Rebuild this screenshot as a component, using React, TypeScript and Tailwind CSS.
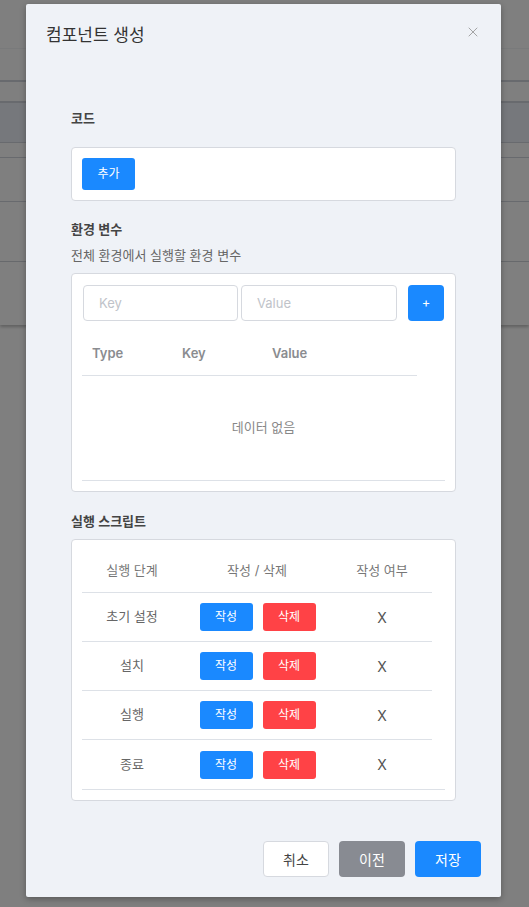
import { X } from 'lucide-react';

const steps = ['초기 설정', '설치', '실행', '종료'];

const font = { fontFamily: 'Inter, "Noto Sans CJK KR", sans-serif' };

function Backdrop() {
  // the page behind the dialog
  return (
    <div className="absolute inset-0 bg-white">
      <div className="h-[49px] border-b border-gray-100" />
      <div className="h-[33px] border-b-2 border-gray-300" />
      <div className="h-[21px] border-b-2 border-gray-300" />
      <div className="h-[40px] bg-[#ecf0f8] border-b border-gray-300" />
      <div className="h-[15px] border-b border-gray-300" />
      <div className="h-[44px] border-b border-gray-300" />
      <div className="h-[60px] border-b border-gray-300" />
      <div className="h-[63px] shadow-[0_2px_3px_rgba(0,0,0,0.25)]" />
    </div>
  );
}

function Card({ children, className = '' }: { children: React.ReactNode; className?: string }) {
  return (
    <div className={`bg-white border border-[#d6d9df] rounded-[4px] ${className}`}>{children}</div>
  );
}

export default function App() {
  return (
    <div className="relative w-[529px] h-[907px] overflow-hidden" style={font}>
      <Backdrop />
      <div className="absolute inset-0 bg-black/50" />

      <div className="absolute left-[26px] top-[4px] w-[475px] h-[893px] bg-[#eff2f7] rounded-[2px] shadow-[0_2px_6px_rgba(0,0,0,0.3)] flex flex-col">
        {/* header */}
        <div className="relative px-5 pt-[19px]">
          <h2 className="text-[17px] leading-6 text-[#333]">컴포넌트 생성</h2>
          <button className="absolute right-[20px] top-[20px] text-[#8f8f8f]">
            <X className="w-[16px] h-[16px]" strokeWidth={1.2} />
          </button>
        </div>

        {/* body */}
        <div className="flex-1 px-[45px] pt-[61px]">
          <div className="text-[13px] leading-5 font-semibold text-[#444]">코드</div>
          <Card className="mt-[19px] p-[10px]">
            <button className="w-[53px] h-[32px] rounded-[3px] bg-[#1a89ff] text-white text-[12px]">추가</button>
          </Card>

          <div className="mt-[18px] text-[13px] leading-5 font-semibold text-[#444]">환경 변수</div>
          <div className="mt-[6px] text-[13px] leading-5 text-[#666]">전체 환경에서 실행할 환경 변수</div>

          <Card className="mt-[8px] px-[10px] pt-[11px] pb-[10px]">
            <div className="flex items-center mx-px">
              <input
                placeholder="Key"
                className="w-[155px] h-[36px] border border-[#d6d9df] rounded-[4px] px-[15px] text-[13px] placeholder:text-[#c0c3c9] outline-none"
              />
              <input
                placeholder="Value"
                className="ml-[3px] w-[156px] h-[36px] border border-[#d6d9df] rounded-[4px] px-[15px] text-[13px] placeholder:text-[#c0c3c9] outline-none"
              />
              <button className="ml-auto w-[36px] h-[36px] rounded-[4px] bg-[#1a89ff] text-white text-[13px]">+</button>
            </div>
            <div className="mt-[12px] border-b border-[#dde1e7]">
              <div className="flex h-[43px] items-center w-[335px] border-b border-[#dde1e7] text-[13px] font-semibold text-[#8a8c90]">
                <div className="w-[90px] pl-[10px]">Type</div>
                <div className="w-[90px] pl-[10px]">Key</div>
                <div className="pl-[10px]">Value</div>
              </div>
              <div className="h-[104px] flex items-center justify-center text-[13px] text-[#888]">데이터 없음</div>
            </div>
          </Card>

          <div className="mt-[19px] text-[13px] leading-5 font-semibold text-[#444]">실행 스크립트</div>

          <Card className="mt-[8px] p-[10px]">
            <div className="border-b border-[#dde1e7]">
              <div className="flex h-[43px] items-center w-[350px] border-b border-[#dde1e7] text-[13px] text-[#777]">
                <div className="w-[100px] text-center">실행 단계</div>
                <div className="w-[150px] text-center">작성 / 삭제</div>
                <div className="w-[100px] text-center">작성 여부</div>
              </div>
              {steps.map((step, i) => (
                <div
                  key={step}
                  className={`flex h-[49px] items-center w-[350px] text-[13px] text-[#666] ${
                    i < steps.length - 1 ? 'border-b border-[#dde1e7]' : 'h-[48px]'
                  }`}
                >
                  <div className="w-[100px] text-center">{step}</div>
                  <div className="w-[150px] flex justify-center gap-[10px] pl-px">
                    <button className="w-[53px] h-[28px] rounded-[3px] bg-[#1a89ff] text-white text-[12px]">작성</button>
                    <button className="w-[53px] h-[28px] rounded-[3px] bg-[#ff4246] text-white text-[12px]">삭제</button>
                  </div>
                  <div className="w-[100px] text-center text-[#555] text-[14px]">X</div>
                </div>
              ))}
            </div>
          </Card>
        </div>

        {/* footer */}
        <div className="flex justify-end gap-[10px] px-5 pb-5">
          <button className="w-[66px] h-[36px] rounded-[4px] bg-white border border-[#d6d9df] text-[14px] text-[#444]">취소</button>
          <button className="w-[66px] h-[36px] rounded-[4px] bg-[#888b92] text-white text-[14px]">이전</button>
          <button className="w-[66px] h-[36px] rounded-[4px] bg-[#1a89ff] text-white text-[14px]">저장</button>
        </div>
      </div>
    </div>
  );
}
